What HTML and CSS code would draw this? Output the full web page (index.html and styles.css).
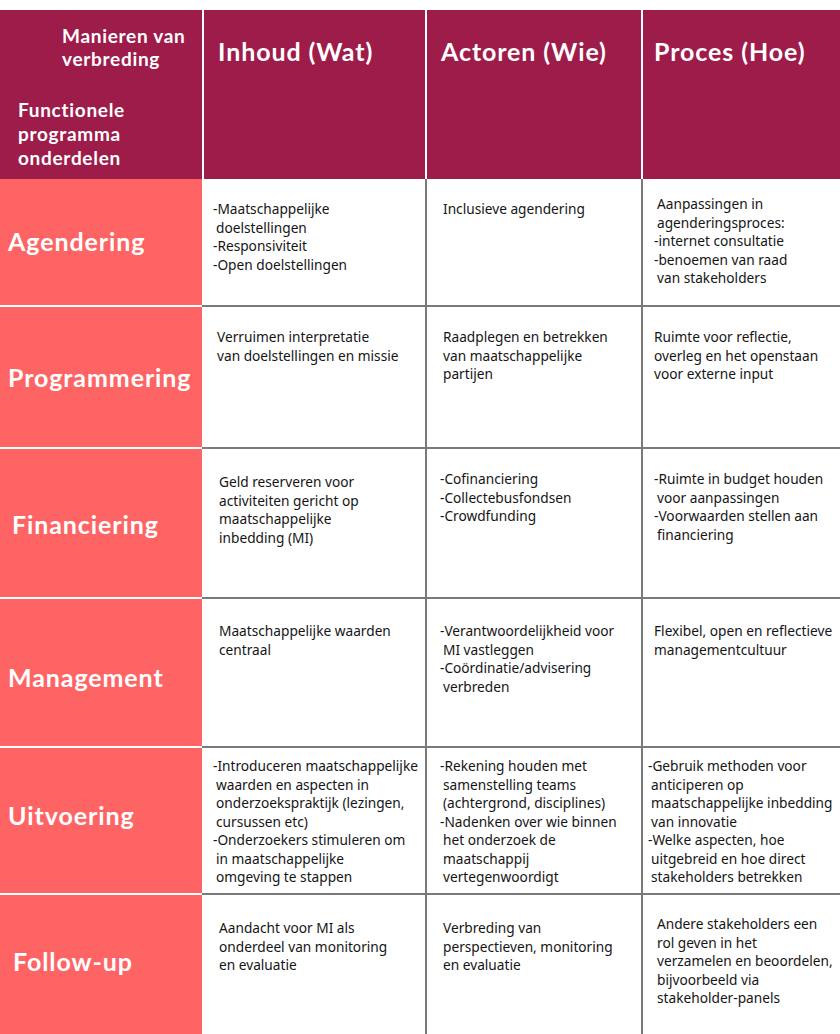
FILE: index.html
```html
<!DOCTYPE html>
<html lang="nl">
<head>
<meta charset="utf-8">
<title>Manieren van verbreding</title>
<link rel="stylesheet" href="styles.css">
</head>
<body>
<div class="table">
  <div class="hcell corner">
    <div class="corner-top">Manieren van<br>verbreding</div>
    <div class="corner-bottom">Functionele<br>programma<br>onderdelen</div>
  </div>
  <div class="hcell c2">Inhoud (Wat)</div>
  <div class="hcell c3">Actoren (Wie)</div>
  <div class="hcell c4">Proces (Hoe)</div>

  <div class="label l1">Agendering</div>
  <div class="cell c2 p1 x213">
    <div>-Maatschappelijke</div>
    <div class="ind">doelstellingen</div>
    <div>-Responsiviteit</div>
    <div>-Open doelstellingen</div>
  </div>
  <div class="cell c3 p1">
    <div class="ind">Inclusieve agendering</div>
  </div>
  <div class="cell c4 p1b">
    <div class="ind">Aanpassingen in</div>
    <div class="ind">agenderingsproces:</div>
    <div>-internet consultatie</div>
    <div>-benoemen van raad</div>
    <div class="ind">van stakeholders</div>
  </div>

  <div class="label l2">Programmering</div>
  <div class="cell c2 p2 x217">
    <div>Verruimen interpretatie</div>
    <div>van doelstellingen en missie</div>
  </div>
  <div class="cell c3 p2">
    <div class="ind">Raadplegen en betrekken</div>
    <div class="ind">van maatschappelijke</div>
    <div class="ind">partijen</div>
  </div>
  <div class="cell c4 p2">
    <div>Ruimte voor reflectie,</div>
    <div>overleg en het openstaan</div>
    <div>voor externe input</div>
  </div>

  <div class="label l3">Financiering</div>
  <div class="cell c2 p3 x219">
    <div>Geld reserveren voor</div>
    <div>activiteiten gericht op</div>
    <div>maatschappelijke</div>
    <div>inbedding (MI)</div>
  </div>
  <div class="cell c3 p3b">
    <div>-Cofinanciering</div>
    <div>-Collectebusfondsen</div>
    <div>-Crowdfunding</div>
  </div>
  <div class="cell c4 p3b">
    <div>-Ruimte in budget houden</div>
    <div class="ind">voor aanpassingen</div>
    <div>-Voorwaarden stellen aan</div>
    <div class="ind">financiering</div>
  </div>

  <div class="label l4">Management</div>
  <div class="cell c2 p4 x219">
    <div>Maatschappelijke waarden</div>
    <div>centraal</div>
  </div>
  <div class="cell c3 p4">
    <div>-Verantwoordelijkheid voor</div>
    <div class="ind">MI vastleggen</div>
    <div>-Coördinatie/advisering</div>
    <div class="ind">verbreden</div>
  </div>
  <div class="cell c4 p4">
    <div>Flexibel, open en reflectieve</div>
    <div>managementcultuur</div>
  </div>

  <div class="label l5">Uitvoering</div>
  <div class="cell c2 p5 x213">
    <div>-Introduceren maatschappelijke</div>
    <div class="ind">waarden en aspecten in</div>
    <div class="ind">onderzoekspraktijk (lezingen,</div>
    <div class="ind">cursussen etc)</div>
    <div>-Onderzoekers stimuleren om</div>
    <div class="ind">in maatschappelijke</div>
    <div class="ind">omgeving te stappen</div>
  </div>
  <div class="cell c3 p5">
    <div>-Rekening houden met</div>
    <div class="ind">samenstelling teams</div>
    <div class="ind">(achtergrond, disciplines)</div>
    <div>-Nadenken over wie binnen</div>
    <div class="ind">het onderzoek de</div>
    <div class="ind">maatschappij</div>
    <div class="ind">vertegenwoordigt</div>
  </div>
  <div class="cell c4 p5 x648">
    <div>-Gebruik methoden voor</div>
    <div class="ind">anticiperen op</div>
    <div class="ind">maatschappelijke inbedding</div>
    <div class="ind">van innovatie</div>
    <div>-Welke aspecten, hoe</div>
    <div class="ind">uitgebreid en hoe direct</div>
    <div class="ind">stakeholders betrekken</div>
  </div>

  <div class="label l6 last">Follow-up</div>
  <div class="cell c2 p6 x219 last">
    <div>Aandacht voor MI als</div>
    <div>onderdeel van monitoring</div>
    <div>en evaluatie</div>
  </div>
  <div class="cell c3 p6 last">
    <div class="ind">Verbreding van</div>
    <div class="ind">perspectieven, monitoring</div>
    <div class="ind">en evaluatie</div>
  </div>
  <div class="cell c4 p6b last">
    <div class="ind">Andere stakeholders een</div>
    <div class="ind">rol geven in het</div>
    <div class="ind">verzamelen en beoordelen,</div>
    <div class="ind">bijvoorbeeld via</div>
    <div class="ind">stakeholder-panels</div>
  </div>
</div>
</body>
</html>
```

FILE: styles.css
```css
html, body {
  margin: 0;
  padding: 0;
  background: #ffffff;
}

body {
  padding-top: 10px;
  width: 840px;
  height: 1024px;
  overflow: hidden;
}

.table {
  display: grid;
  grid-template-columns: 202px 223px 216px 199px;
  grid-template-rows: 169px 128px 142px 150px 149px 147px 139px;
  width: 840px;
}

.hcell {
  background: #9e1c4a;
  color: #ffffff;
  font-family: "Lato", "Noto Sans", sans-serif;
  font-weight: 700;
  font-size: 25px;
  letter-spacing: 0.9px;
  line-height: 30px;
  padding-top: 26px;
  box-sizing: border-box;
  white-space: nowrap;
}

.hcell.c2 { border-left: 2px solid #ffffff; padding-left: 14px; }
.hcell.c3 { border-left: 2px solid #ffffff; padding-left: 14px; }
.hcell.c4 { border-left: 2px solid #ffffff; padding-left: 11px; }

.corner {
  padding-top: 0;
  font-size: 19px;
  letter-spacing: 0.7px;
  line-height: 23px;
  display: flex;
  flex-direction: column;
}

.corner-top {
  padding-left: 62px;
  padding-top: 14px;
}

.corner-bottom {
  padding-left: 18px;
  padding-top: 28px;
  line-height: 24px;
}

.label {
  background: #fe6464;
  color: #ffffff;
  font-family: "Lato", "Noto Sans", sans-serif;
  font-weight: 700;
  font-size: 25px;
  letter-spacing: 0.9px;
  display: flex;
  align-items: center;
  padding-left: 8px;
  border-bottom: 2px solid #ffffff;
  box-sizing: border-box;
  white-space: nowrap;
}

.label.l1 { padding-bottom: 2px; }
.label.l3 { padding-left: 12px; padding-top: 2px; }
.label.l4 { padding-top: 8px; }
.label.l5 { padding-bottom: 12px; }
.label.l6 { padding-left: 13px; padding-bottom: 8px; }

.cell {
  background: #ffffff;
  color: #151515;
  font-family: "Noto Sans", "Open Sans", sans-serif;
  font-size: 13.7px;
  line-height: 18.5px;
  border-bottom: 2px solid #7a7a7a;
  box-sizing: border-box;
  padding-top: 21px;
  white-space: nowrap;
}

.cell.c2 { padding-left: 11px; }
.cell.c3 { border-left: 2px solid #7a7a7a; padding-left: 13px; }
.cell.c4 { border-left: 2px solid #7a7a7a; padding-left: 11px; }

.cell.x213 { padding-left: 11px; }
.cell.x217 { padding-left: 15px; }
.cell.x219 { padding-left: 17px; }
.cell.c4.x648 { padding-left: 5px; }

.cell.p1 { padding-top: 21px; }
.cell.p1b { padding-top: 16px; }
.cell.p2 { padding-top: 21px; }
.cell.p3 { padding-top: 24px; }
.cell.p3b { padding-top: 21px; }
.cell.p4 { padding-top: 23px; }
.cell.p5 { padding-top: 9px; }
.cell.p6 { padding-top: 24px; }
.cell.p6b { padding-top: 20px; }

.cell .ind { padding-left: 3px; }

.last { border-bottom: none; }
```
